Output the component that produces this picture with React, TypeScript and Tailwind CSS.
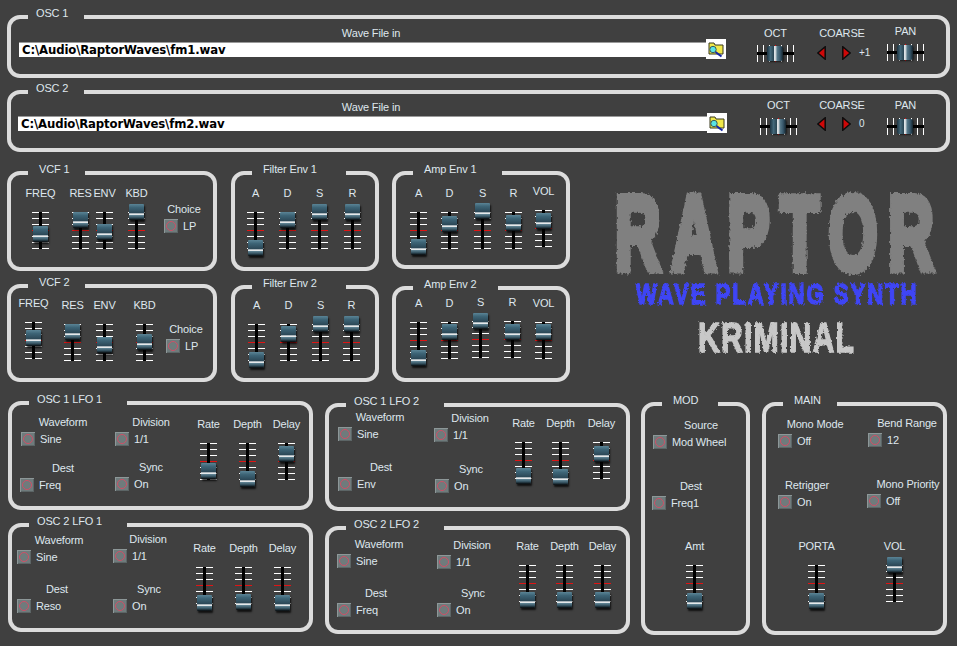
import type { ReactNode } from "react";

function Panel({ title, titleW, titlePad = "pl-[11px]", className = "", children }: { title: string; titleW: string; titlePad?: string; className?: string; children?: ReactNode }) {
  return (
    <div className={"relative shrink-0 rounded-[13px] border-4 border-[#dcdcdc] " + className}>
      <div className={"absolute left-[17px] top-[-12px] h-[12px] whitespace-nowrap bg-[#404040] leading-[12px] " + titleW + " " + titlePad}>{title}</div>
      {children}
    </div>
  );
}

function Fader({ label, cap, className = "" }: { label: string; cap: number; className?: string }) {
  return (
    <div className={"flex w-[17px] shrink-0 flex-col items-center " + className}>
      <div className="mb-[12px] h-[13px] whitespace-nowrap leading-[13px]">{label}</div>
      <div className="relative h-[37px] w-[17px]">
        <div className="flex h-full flex-col justify-between">
          {[0, 1, 2, 3, 4, 5, 6].map((i) => (
            <div key={i} className={i === 3 ? "h-px w-full bg-[#e01414]" : "h-px w-full bg-white"} />
          ))}
        </div>
        <div className="absolute left-[7px] top-0 h-[37px] w-[3px] bg-black" />
        <div
          className="absolute left-px h-[16px] w-[15px] rounded-[1px] bg-[linear-gradient(to_bottom,#5a8496_0%,#3d6476_22%,#2a4554_58%,#e4e8ea_60%,#e4e8ea_67%,#5f8292_71%,#34515f_85%,#06090b_100%)] shadow-[1px_2px_2px_rgba(0,0,0,0.75)]"
          style={{ top: cap }}
        />
      </div>
    </div>
  );
}

function HFader({ label, className = "" }: { label: string; className?: string }) {
  return (
    <div className={"flex w-[37px] shrink-0 flex-col items-center " + className}>
      <div className="h-[13px] whitespace-nowrap leading-[13px]">{label}</div>
      <div className="relative mt-[5px] h-[17px] w-[37px]">
        <div className="flex h-full justify-between">
          {[0, 1, 2, 3, 4, 5, 6].map((i) => (
            <div key={i} className={i === 3 ? "h-full w-px bg-[#e01414]" : "h-full w-px bg-white"} />
          ))}
        </div>
        <div className="absolute left-0 top-[7px] h-[3px] w-[37px] bg-black" />
        <div className="absolute left-[10px] top-px h-[15px] w-[16px] rounded-[2px] bg-[linear-gradient(to_right,#1c3240_0%,#43687a_22%,#2a4553_42%,#dfe5e8_46%,#c4ced3_56%,#5a7c8c_62%,#36566a_82%,#15242c_100%)] shadow-[1px_1px_2px_rgba(0,0,0,0.6)]" />
      </div>
    </div>
  );
}

function Toggle({ label, value, labelW, className = "" }: { label: string; value: string; labelW: string; className?: string }) {
  return (
    <div className={"flex shrink-0 flex-col items-start " + className}>
      <div className={"h-[13px] whitespace-nowrap text-center leading-[13px] " + labelW}>{label}</div>
      <div className="mt-[3px] flex items-center gap-[5px] whitespace-nowrap">
        <div className="flex h-[14px] w-[14px] items-center justify-center bg-[#6f7b7c] shadow-[inset_1px_1px_0_#8d9798,inset_-1px_-1px_0_#5c6566]">
          <div className="h-[10px] w-[10px] rounded-full border-[1.5px] border-[#d04f66]" />
        </div>
        <span className="leading-[13px]">{value}</span>
      </div>
    </div>
  );
}

function Arrow({ flip = false }: { flip?: boolean }) {
  return (
    <svg viewBox="0 0 9 14" className={flip ? "h-[14px] w-[9px] -scale-x-100" : "h-[14px] w-[9px]"}>
      <polygon points="8.2,0.8 8.2,13.2 0.8,7" fill="#cf0808" stroke="#0c0c0c" strokeWidth="1.5" />
    </svg>
  );
}

function Browse() {
  return (
    <div className="h-[20px] w-[20px] shrink-0 bg-white">
      <svg viewBox="0 0 20 20" className="h-full w-full">
        <path d="M3 6 L3 4 L8 4 L9 6 L17 6 L17 15 L3 15 Z" fill="#f0e84a" stroke="#38381c" strokeWidth="1" />
        <circle cx="7" cy="10.5" r="3.2" fill="#58e4e4" stroke="#3a5a5a" strokeWidth="1" />
        <line x1="9.5" y1="13" x2="15.5" y2="17.5" stroke="#1426a8" strokeWidth="2" />
      </svg>
    </div>
  );
}

function WaveFile({ path, className = "", labelW, barW }: { path: string; className?: string; labelW: string; barW: string }) {
  return (
    <div className={"flex shrink-0 flex-col " + className}>
      <div className={"h-[13px] text-center leading-[13px] " + labelW}>Wave File in</div>
      <div className="mt-[-1px] flex items-center">
        <div className={"h-[15px] border-t border-[#9a9a9a] bg-white pl-[3px] font-['DejaVu_Sans_Condensed','Liberation_Sans',sans-serif] text-[13px] font-bold leading-[14px] text-black " + barW}>{path}</div>
        <Browse />
      </div>
    </div>
  );
}

function Coarse({ value, className = "", rowClass }: { value: string; className?: string; rowClass: string }) {
  return (
    <div className={"flex w-[70px] shrink-0 flex-col items-start " + className}>
      <div className="h-[13px] w-[50px] whitespace-nowrap text-center leading-[13px]">COARSE</div>
      <div className={"flex items-center " + rowClass}>
        <Arrow />
        <div className="ml-[16px]">
          <Arrow flip />
        </div>
        <span className="ml-[8px] text-[10px]">{value}</span>
      </div>
    </div>
  );
}

function Logo() {
  return (
    <div className="ml-[45px] mt-[24px] flex w-[330px] shrink-0 flex-col">
      <svg className="absolute h-0 w-0">
        <filter id="rough">
          <feTurbulence type="fractalNoise" baseFrequency="0.3" numOctaves="2" seed="4" />
          <feDisplacementMap in="SourceGraphic" scale="6" />
        </filter>
        <filter id="rough2">
          <feTurbulence type="fractalNoise" baseFrequency="0.4" numOctaves="2" seed="7" />
          <feDisplacementMap in="SourceGraphic" scale="4" />
        </filter>
      </svg>
      <div className="h-[77px] origin-left scale-x-[0.6] whitespace-nowrap text-[105px] font-bold leading-[77px] tracking-[18px] text-[#808080] [-webkit-text-stroke:8px_#808080] [filter:url(#rough)]">RAPTOR</div>
      <div className="ml-[21px] mt-[10px] h-[23px] origin-left scale-x-[0.74] whitespace-nowrap text-[30px] font-bold leading-[23px] tracking-[2.6px] text-[#3f45f5] [-webkit-text-stroke:1.5px_#3f45f5] [filter:url(#rough2)]">WAVE PLAYING SYNTH</div>
      <div className="ml-[83px] mt-[17px] h-[31px] origin-left scale-x-[0.72] whitespace-nowrap text-[42px] font-bold leading-[31px] tracking-[1.6px] text-[#c8c8c8] [-webkit-text-stroke:1.5px_#c8c8c8] [filter:url(#rough2)]">KRIMINAL</div>
    </div>
  );
}

export default function App() {
  return (
    <div className="relative flex h-[646px] w-[957px] flex-col overflow-hidden bg-[#404040] pl-[7px] pt-[15px] font-['Liberation_Sans',Arial,sans-serif] text-[11px] tracking-[-0.15px] text-[#dfe7ee]">
      {/* oscillators */}
      <Panel title="OSC 1" titleW="w-[56px]" titlePad="pl-[8px]" className="flex h-[63px] w-[943px] items-start">
        <WaveFile path="C:\Audio\RaptorWaves\fm1.wav" className="ml-[8px] mt-[8px]" labelW="w-[704px]" barW="w-[687px]" />
        <HFader label="OCT" className="ml-[31px] mt-[8px]" />
        <Coarse value="+1" className="ml-[23px] mt-[8px]" rowClass="mt-[5px]" />
        <HFader label="PAN" className="mt-[6px] [&>div:last-child]:mt-[6px]" />
      </Panel>
      <Panel title="OSC 2" titleW="w-[56px]" titlePad="pl-[8px]" className="mt-[12px] flex h-[62px] w-[943px] items-start">
        <WaveFile path="C:\Audio\RaptorWaves\fm2.wav" className="ml-[7px] mt-[7px]" labelW="w-[706px]" barW="w-[689px]" />
        <HFader label="OCT" className="ml-[33px] mt-[5px] [&>div:last-child]:mt-[6px]" />
        <Coarse value="0" className="ml-[20px] mt-[5px]" rowClass="mt-[4px]" />
        <HFader label="PAN" className="mt-[5px] [&>div:last-child]:mt-[6px]" />
      </Panel>

      {/* filters and envelopes */}
      <div className="mt-[19px] flex items-start">
        <div className="flex w-[210px] shrink-0 flex-col">
          <Panel title="VCF 1" titleW="w-[57px]" className="flex h-[100px] w-[210px] items-start">
            <Fader label="FREQ" cap={14} className="ml-[21px] mt-[12px]" />
            <Fader label="RES" cap={0} className="ml-[23px] mt-[12px]" />
            <Fader label="ENV" cap={12} className="ml-[7px] mt-[12px]" />
            <Fader label="KBD" cap={-8} className="ml-[15px] mt-[12px]" />
            <Toggle label="Choice" value="LP" labelW="w-[40px]" className="ml-[19px] mt-[28px]" />
          </Panel>
          <Panel title="VCF 2" titleW="w-[57px]" className="mt-[13px] flex h-[98px] w-[210px] items-start">
            <Fader label="FREQ" cap={8} className="ml-[14px] mt-[9px]" />
            <Fader label="RES" cap={0} className="ml-[22px] mt-[11px]" />
            <Fader label="ENV" cap={13} className="ml-[15px] mt-[11px]" />
            <Fader label="KBD" cap={10} className="ml-[23px] mt-[11px]" />
            <Toggle label="Choice" value="LP" labelW="w-[40px]" className="ml-[13px] mt-[35px]" />
          </Panel>
        </div>
        <div className="ml-[14px] flex w-[148px] shrink-0 flex-col">
          <Panel title="Filter Env 1" titleW="w-[94px]" className="flex h-[100px] w-[148px] items-start">
            <Fader label="A" cap={28} className="ml-[12px] mt-[12px]" />
            <Fader label="D" cap={0} className="ml-[15px] mt-[12px]" />
            <Fader label="S" cap={-8} className="ml-[15px] mt-[12px]" />
            <Fader label="R" cap={-8} className="ml-[16px] mt-[12px]" />
          </Panel>
          <Panel title="Filter Env 2" titleW="w-[94px]" className="mt-[14px] flex h-[97px] w-[148px] items-start">
            <Fader label="A" cap={28} className="ml-[13px] mt-[10px]" />
            <Fader label="D" cap={2} className="ml-[15px] mt-[10px]" />
            <Fader label="S" cap={-8} className="ml-[15px] mt-[10px]" />
            <Fader label="R" cap={-8} className="ml-[14px] mt-[10px]" />
          </Panel>
        </div>
        <div className="ml-[13px] flex w-[178px] shrink-0 flex-col">
          <Panel title="Amp Env 1" titleW="w-[89px]" className="flex h-[98px] w-[178px] items-start">
            <Fader label="A" cap={27} className="ml-[14px] mt-[12px]" />
            <Fader label="D" cap={4} className="ml-[14px] mt-[12px]" />
            <Fader label="S" cap={-9} className="ml-[16px] mt-[12px]" />
            <Fader label="R" cap={3} className="ml-[14px] mt-[12px]" />
            <Fader label="VOL" cap={3} className="ml-[13px] mt-[10px]" />
          </Panel>
          <Panel title="Amp Env 2" titleW="w-[85px]" className="mt-[17px] flex h-[96px] w-[178px] items-start">
            <Fader label="A" cap={28} className="ml-[14px] mt-[7px]" />
            <Fader label="D" cap={2} className="ml-[14px] mt-[7px]" />
            <Fader label="S" cap={-8} className="ml-[14px] mt-[6px]" />
            <Fader label="R" cap={3} className="ml-[15px] mt-[6px]" />
            <Fader label="VOL" cap={2} className="ml-[14px] mt-[7px]" />
          </Panel>
        </div>
        <Logo />
      </div>

      {/* lfos, mod, main */}
      <div className="mt-[19px] flex items-start">
        <div className="ml-px flex w-[305px] shrink-0 flex-col">
          <Panel title="OSC 1 LFO 1" titleW="w-[98px]" titlePad="pl-[8px]" className="flex h-[109px] w-[305px] items-start">
            <div className="flex w-[103px] shrink-0 flex-col">
              <Toggle label="Waveform" value="Sine" labelW="w-[84px]" className="ml-[9px] mt-[11px]" />
              <Toggle label="Dest" value="Freq" labelW="w-[86px]" className="ml-[8px] mt-[16px]" />
            </div>
            <div className="flex w-[85px] shrink-0 flex-col">
              <Toggle label="Division" value="1/1" labelW="w-[72px]" className="mt-[11px]" />
              <Toggle label="Sync" value="On" labelW="w-[72px]" className="mt-[15px]" />
            </div>
            <Fader label="Rate" cap={20} className="mt-[13px]" />
            <Fader label="Depth" cap={28} className="ml-[22px] mt-[13px]" />
            <Fader label="Delay" cap={3} className="ml-[22px] mt-[13px]" />
          </Panel>
          <Panel title="OSC 2 LFO 1" titleW="w-[98px]" titlePad="pl-[8px]" className="mt-[13px] flex h-[109px] w-[305px] items-start">
            <div className="flex w-[101px] shrink-0 flex-col">
              <Toggle label="Waveform" value="Sine" labelW="w-[84px]" className="ml-[5px] mt-[7px]" />
              <Toggle label="Dest" value="Reso" labelW="w-[80px]" className="ml-[5px] mt-[19px]" />
            </div>
            <div className="flex w-[83px] shrink-0 flex-col">
              <Toggle label="Division" value="1/1" labelW="w-[70px]" className="mt-[6px]" />
              <Toggle label="Sync" value="On" labelW="w-[72px]" className="mt-[20px]" />
            </div>
            <Fader label="Rate" cap={28} className="mt-[15px]" />
            <Fader label="Depth" cap={27} className="ml-[22px] mt-[15px]" />
            <Fader label="Delay" cap={28} className="ml-[22px] mt-[15px]" />
          </Panel>
        </div>
        <div className="ml-[12px] mt-[2px] flex w-[305px] shrink-0 flex-col">
          <Panel title="OSC 1 LFO 2" titleW="w-[98px]" titlePad="pl-[8px]" className="flex h-[108px] w-[305px] items-start">
            <div className="flex w-[105px] shrink-0 flex-col">
              <Toggle label="Waveform" value="Sine" labelW="w-[84px]" className="ml-[9px] mt-[4px]" />
              <Toggle label="Dest" value="Env" labelW="w-[86px]" className="ml-[9px] mt-[20px]" />
            </div>
            <div className="flex w-[81px] shrink-0 flex-col">
              <Toggle label="Division" value="1/1" labelW="w-[72px]" className="mt-[5px]" />
              <Toggle label="Sync" value="On" labelW="w-[72px]" className="ml-px mt-[21px]" />
            </div>
            <Fader label="Rate" cap={26} className="mt-[10px]" />
            <Fader label="Depth" cap={27} className="ml-[20px] mt-[10px]" />
            <Fader label="Delay" cap={4} className="ml-[24px] mt-[10px]" />
          </Panel>
          <Panel title="OSC 2 LFO 2" titleW="w-[98px]" titlePad="pl-[8px]" className="mt-[15px] flex h-[108px] w-[305px] items-start">
            <div className="flex w-[108px] shrink-0 flex-col">
              <Toggle label="Waveform" value="Sine" labelW="w-[84px]" className="ml-[8px] mt-[8px]" />
              <Toggle label="Dest" value="Freq" labelW="w-[78px]" className="ml-[8px] mt-[19px]" />
            </div>
            <div className="flex w-[82px] shrink-0 flex-col">
              <Toggle label="Division" value="1/1" labelW="w-[70px]" className="mt-[9px]" />
              <Toggle label="Sync" value="On" labelW="w-[72px]" className="mt-[18px]" />
            </div>
            <Fader label="Rate" cap={27} className="mt-[10px]" />
            <Fader label="Depth" cap={27} className="ml-[20px] mt-[10px]" />
            <Fader label="Delay" cap={27} className="ml-[21px] mt-[10px]" />
          </Panel>
        </div>
        <Panel title="MOD" titleW="w-[56px]" className="ml-[11px] mt-px flex h-[233px] w-[109px] flex-col">
          <Toggle label="Source" value="Mod Wheel" labelW="w-[96px]" className="ml-[8px] mt-[13px]" />
          <Toggle label="Dest" value="Freq1" labelW="w-[78px]" className="ml-[7px] mt-[31px]" />
          <Fader label="Amt" cap={28} className="ml-[41px] mt-[30px]" />
        </Panel>
        <Panel title="MAIN" titleW="w-[54px]" className="ml-[12px] mt-px flex h-[233px] w-[185px] items-start">
          <div className="flex w-[102px] shrink-0 flex-col">
            <Toggle label="Mono Mode" value="Off" labelW="w-[74px]" className="ml-[12px] mt-[12px]" />
            <Toggle label="Retrigger" value="On" labelW="w-[58px]" className="ml-[12px] mt-[31px]" />
            <Fader label="PORTA" cap={28} className="ml-[42px] mt-[31px]" />
          </div>
          <div className="flex shrink-0 flex-col">
            <Toggle label="Bend Range" value="12" labelW="w-[78px]" className="mt-[11px]" />
            <Toggle label="Mono Priority" value="Off" labelW="w-[82px]" className="ml-[-1px] mt-[31px]" />
            <Fader label="VOL" cap={-8} className="ml-[18px] mt-[32px]" />
          </div>
        </Panel>
      </div>
    </div>
  );
}
